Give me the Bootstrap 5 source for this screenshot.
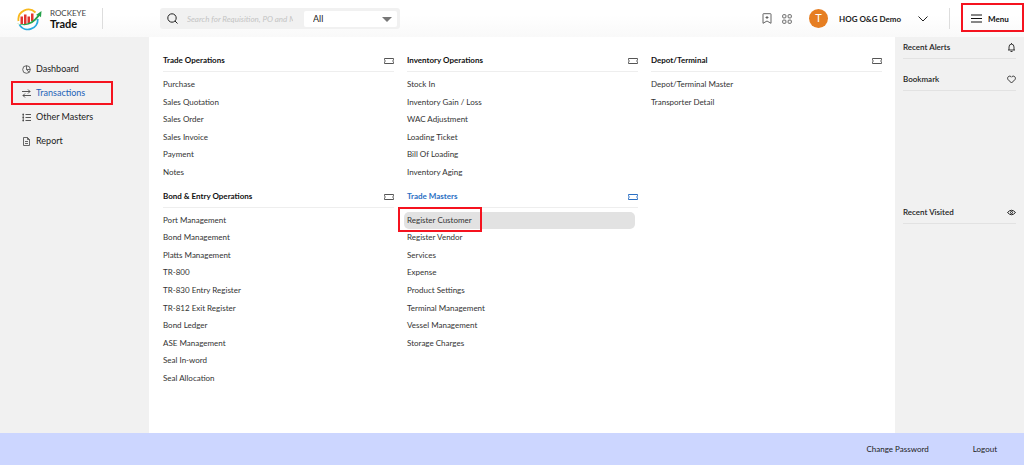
<!DOCTYPE html>
<html lang="en">
<head>
<meta charset="utf-8">
<meta name="viewport" content="width=device-width, initial-scale=1">
<title>Rockeye Trade</title>
<link href="https://cdn.jsdelivr.net/npm/bootstrap@5.3.0/dist/css/bootstrap.min.css" rel="stylesheet">
<style>
  body { font-family: Lato, "Liberation Sans", sans-serif; font-size: 8px; color: #222; background: #fff; }
  a { color: inherit; text-decoration: none; }
  svg { display: block; flex: none; fill: none; stroke: currentColor; }
  ul { list-style: none; margin: 0; padding: 0; }
  .flagged { outline: 2px solid #f5131f; outline-offset: -2px; }

  .topbar { height: 37px; padding-left: 15px; background: linear-gradient(#fff 40%, #f9f9f9); }
  .brand { width: 87px; gap: 8px; }
  .brand svg { stroke: none; }
  .brand-top { font-size: 8px; line-height: 9px; color: #444; }
  .brand-name { font-size: 11px; line-height: 11px; font-weight: 700; color: #111; }
  .rule { width: 1px; height: 21px; background: #ddd; }
  .searchbox { width: 240px; height: 21px; margin-left: 57px; padding: 3px 3px 3px 7px; border-radius: 3px; background: #f1f1f1; }
  .searchbox input { width: 106px; margin-left: 9px; border: 0; padding: 0; background: none; font-size: 8px; font-style: italic; outline: 0; }
  .searchbox input::placeholder { color: #c4c4c4; opacity: 1; }
  .scope { width: 93px; height: 16px; }
  .scope select { width: 100%; height: 100%; border: 0; border-radius: 2px; padding: 0 9px; background: #fff; appearance: none; font-size: 9px; line-height: 16px; color: #222; }
  .scope::after { content: ""; position: absolute; right: 5px; top: 6px; border: 5px solid transparent; border-top-color: #777; border-bottom: 0; pointer-events: none; }
  .plain { border: 0; padding: 0; background: none; color: inherit; }
  .tools { gap: 10px; margin-right: 17px; color: #555; }
  .avatar { width: 19px; height: 19px; border-radius: 50%; background: #e67e22; color: #fff; font-size: 11px; }
  .account { margin: 0 21px 0 11px; gap: 17px; font-weight: 700; }
  .menu-btn { width: 63px; height: 29px; margin-left: 11px; margin-bottom: 2px; padding: 2px 0 0 10px; gap: 6px; font-weight: 700; color: #111; }

  .sidebar { width: 149px; padding: 20px 11px; background: #f1f1f1; font-size: 9px; }
  .sidebar a { width: 102px; height: 24px; gap: 5px; padding-left: 11px; }
  .sidebar svg { color: #444; }
  .sidebar .active { color: #1e63b8; }

  .sections { display: grid; grid-template-columns: repeat(3, 1fr); align-content: start; gap: 5px 13px; padding: 14px 13px 14px 14px; }
  .section-head { height: 21px; margin-bottom: 4px; border-bottom: 1px solid #eee; font-size: 8px; font-weight: 700; color: #111; }
  .section-head svg { color: #555; }
  .section-head.active, .section-head.active svg { color: #2a6fc4; }
  .section-list { margin: 0 3px 0 -3px; line-height: 2.2; color: #333; }
  .section-list a { display: block; padding-left: 3px; }
  .section-list .active { border-radius: 5px; background: #e2e2e2; }
  .callout { left: -6px; top: -5px; width: 84px; height: 25px; pointer-events: none; }

  .aside-panel { width: 129px; padding: 0 8px; background: #f1f1f1; }
  .panel-head { height: 22px; border-bottom: 1px solid #e2e2e2; font-size: 8px; font-weight: 600; }
  .bookmarks { min-height: 143px; padding-top: 10px; }

  .bottombar { height: 32px; padding-right: 27px; gap: 44px; background: #ccd6ff; }
</style>
</head>
<body class="d-flex flex-column min-vh-100">
<svg width="0" height="0" class="position-absolute" aria-hidden="true">
  <symbol id="ticket" viewBox="0 0 10 8"><path d="M.5 1.500h9v1.300q-1.500 1.200 0 2.400V6.500h-9V5.200q1.500-1.200 0-2.400z"/></symbol>
</svg>

<header class="topbar d-flex align-items-center">
  <a href="#" class="brand d-flex align-items-center">
    <svg width="27" height="24" viewBox="0 0 27 24">
      <path d="M3.500 14A10 10 0 0 1 20.500 5.500" stroke="#f8b81c" stroke-width="1.800"/>
      <path d="M4.500 18A10 10 0 0 0 22.800 12" stroke="#29a9e0" stroke-width="1.800"/>
      <path d="M5.500 9.500h2.500V17H5.500zM9 7.500h2.500V17H9zM12.500 9.500H15V16h-2.500zM16 6.500h2.500V14H16z" fill="#e2352f"/>
      <path d="M1.500 16.500Q14 20 22.500 8.500L21 8l5.500-4L26 10.200l-1.500-1.100Q15.500 22 1.500 16.500z" fill="#25a24a"/>
    </svg>
    <span><span class="brand-top d-block">ROCKEYE</span><span class="brand-name d-block">Trade</span></span>
  </a>
  <div class="rule"></div>
  <form class="searchbox d-flex align-items-center" role="search">
    <svg width="11" height="11" viewBox="0 0 11 11"><circle cx="5" cy="5" r="4.200"/><path d="M8 8l2.500 2.500"/></svg>
    <input type="text" aria-label="Search" placeholder="Search for Requisition, PO and More">
    <div class="scope position-relative ms-auto">
      <select aria-label="Search scope"><option>All</option></select>
    </div>
  </form>
  <div class="tools d-flex align-items-center ms-auto">
    <button type="button" class="plain" aria-label="Add bookmark">
      <svg width="10" height="11" viewBox="0 0 10 11" stroke-width=".9"><path d="M1 10.300V1.200Q1 .7 1.500.7h7q.5 0 .5.5v9.100L5 8z M5 3v3M3.500 4.500h3"/></svg>
    </button>
    <button type="button" class="plain" aria-label="Apps">
      <svg width="10" height="10" viewBox="0 0 10 10" stroke-width=".9"><rect x=".7" y=".7" width="3.200" height="3.200" rx=".8"/><rect x="6.100" y=".7" width="3.200" height="3.200" rx=".8"/><rect x=".7" y="6.100" width="3.200" height="3.200" rx=".8"/><rect x="6.100" y="6.100" width="3.200" height="3.200" rx=".8"/></svg>
    </button>
  </div>
  <span class="avatar d-flex align-items-center justify-content-center">T</span>
  <button type="button" class="plain account d-flex align-items-center">
    HOG O&amp;G Demo
    <svg width="10" height="6" viewBox="0 0 10 6"><path d="M.5.500L5 5 9.500.500"/></svg>
  </button>
  <div class="rule"></div>
  <button type="button" class="plain menu-btn flagged d-flex align-items-center">
    <svg width="11" height="9" viewBox="0 0 11 9"><path d="M0 1h11M0 4.500h11M0 8h11"/></svg>
    Menu
  </button>
</header>

<main class="d-flex flex-grow-1">
  <nav class="sidebar flex-shrink-0" aria-label="Main">
    <ul>
      <li><a href="#" class="d-flex align-items-center"><svg width="9" height="9" viewBox="0 0 9 9" stroke-width=".8"><circle cx="4.500" cy="4.500" r="3.800"/><path d="M4.500.7v3.800h3.800M4.500 4.500l2.500 2.700"/></svg>Dashboard</a></li>
      <li><a href="#" class="active flagged d-flex align-items-center"><svg width="9" height="9" viewBox="0 0 9 9" stroke-width=".9"><path d="M0 2.500h8M6 .5l2 2-2 2M9 6.500H1M3 4.500l-2 2 2 2"/></svg>Transactions</a></li>
      <li><a href="#" class="d-flex align-items-center"><svg width="9" height="9" viewBox="0 0 9 9" stroke-width=".9"><path d="M3.500 1.500H9M3.500 4.500H9M3.500 7.500H9M.5 1.500H2M.5 4.500H2M.5 7.500H2M1.200.5v8"/></svg>Other Masters</a></li>
      <li><a href="#" class="d-flex align-items-center"><svg width="9" height="9" viewBox="0 0 9 9" stroke-width=".8"><path d="M1.500.500h4L7.500 2.500v6h-6zM5.500.500v2h2M3 4.500h3M3 6.500h3"/></svg>Report</a></li>
    </ul>
  </nav>

  <div class="sections flex-grow-1">
    <section>
      <h2 class="section-head d-flex align-items-center justify-content-between">Trade Operations <svg width="10" height="8"><use href="#ticket"/></svg></h2>
      <ul class="section-list">
        <li><a href="#">Purchase</a></li>
        <li><a href="#">Sales Quotation</a></li>
        <li><a href="#">Sales Order</a></li>
        <li><a href="#">Sales Invoice</a></li>
        <li><a href="#">Payment</a></li>
        <li><a href="#">Notes</a></li>
      </ul>
    </section>
    <section>
      <h2 class="section-head d-flex align-items-center justify-content-between">Inventory Operations <svg width="10" height="8"><use href="#ticket"/></svg></h2>
      <ul class="section-list">
        <li><a href="#">Stock In</a></li>
        <li><a href="#">Inventory Gain / Loss</a></li>
        <li><a href="#">WAC Adjustment</a></li>
        <li><a href="#">Loading Ticket</a></li>
        <li><a href="#">Bill Of Loading</a></li>
        <li><a href="#">Inventory Aging</a></li>
      </ul>
    </section>
    <section>
      <h2 class="section-head d-flex align-items-center justify-content-between">Depot/Terminal <svg width="10" height="8"><use href="#ticket"/></svg></h2>
      <ul class="section-list">
        <li><a href="#">Depot/Terminal Master</a></li>
        <li><a href="#">Transporter Detail</a></li>
      </ul>
    </section>
    <section>
      <h2 class="section-head d-flex align-items-center justify-content-between">Bond &amp; Entry Operations <svg width="10" height="8"><use href="#ticket"/></svg></h2>
      <ul class="section-list">
        <li><a href="#">Port Management</a></li>
        <li><a href="#">Bond Management</a></li>
        <li><a href="#">Platts Management</a></li>
        <li><a href="#">TR-800</a></li>
        <li><a href="#">TR-830 Entry Register</a></li>
        <li><a href="#">TR-812 Exit Register</a></li>
        <li><a href="#">Bond Ledger</a></li>
        <li><a href="#">ASE Management</a></li>
        <li><a href="#">Seal In-word</a></li>
        <li><a href="#">Seal Allocation</a></li>
      </ul>
    </section>
    <section>
      <h2 class="section-head active d-flex align-items-center justify-content-between">Trade Masters <svg width="10" height="8"><use href="#ticket"/></svg></h2>
      <ul class="section-list">
        <li class="position-relative"><a href="#" class="active">Register Customer</a><span class="callout flagged position-absolute"></span></li>
        <li><a href="#">Register Vendor</a></li>
        <li><a href="#">Services</a></li>
        <li><a href="#">Expense</a></li>
        <li><a href="#">Product Settings</a></li>
        <li><a href="#">Terminal Management</a></li>
        <li><a href="#">Vessel Management</a></li>
        <li><a href="#">Storage Charges</a></li>
      </ul>
    </section>
  </div>

  <aside class="aside-panel flex-shrink-0">
    <h2 class="panel-head d-flex align-items-center justify-content-between m-0">Recent Alerts
      <svg width="9" height="9" viewBox="0 0 9 9" stroke-width=".9"><path d="M1 7h7M2 7V4Q2 1.200 4.500 1.200T7 4v3M4.500 0v1M3.500 8.500h2"/></svg></h2>
    <div class="bookmarks">
      <h2 class="panel-head d-flex align-items-center justify-content-between m-0">Bookmark
        <svg width="9" height="9" viewBox="0 0 9 9" stroke-width=".9"><path d="M4.500 8L1 4.500C-.5 2.500 2.500-.5 4.500 2.200 6.500-.5 9.500 2.500 8 4.500z"/></svg></h2>
    </div>
    <h2 class="panel-head d-flex align-items-center justify-content-between m-0">Recent Visited
      <svg width="9" height="9" viewBox="0 0 9 9"><path d="M.5 4.500Q4.500 0 8.500 4.500 4.500 9 .5 4.500z"/><circle cx="4.500" cy="4.500" r="1"/></svg></h2>
  </aside>
</main>

<footer class="bottombar d-flex align-items-center justify-content-end">
  <a href="#">Change Password</a>
  <a href="#">Logout</a>
</footer>
<script src="https://cdn.jsdelivr.net/npm/bootstrap@5.3.0/dist/js/bootstrap.bundle.min.js"></script>
</body>
</html>
